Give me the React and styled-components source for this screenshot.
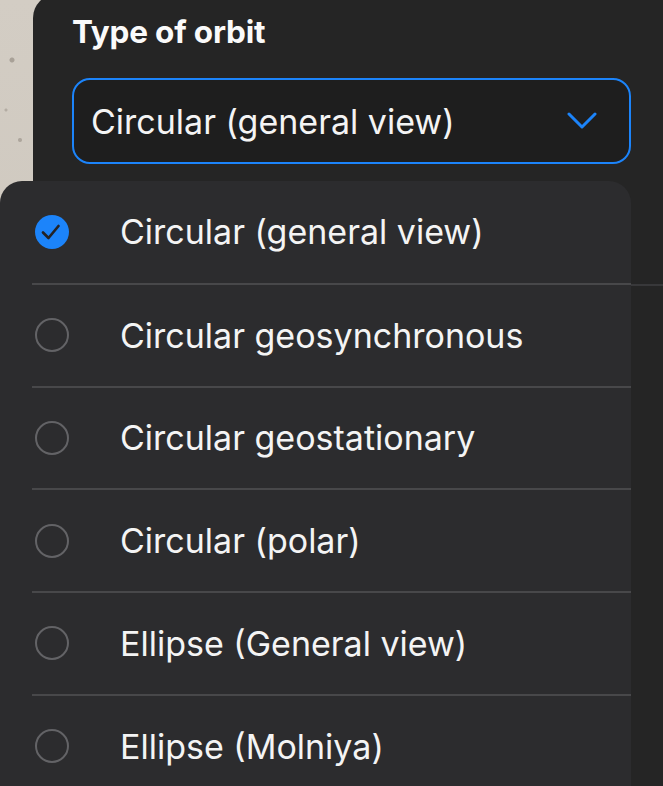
import React, { useState } from "react"
import styled, { createGlobalStyle } from "styled-components"

const GlobalStyle = createGlobalStyle`
  html, body { margin: 0; padding: 0; }
  body {
    font-family: Inter, "Noto Sans", "Liberation Sans", sans-serif;
    background: #cbc5bc;
    -webkit-font-smoothing: antialiased;
  }
`

const orbits = [
  "Circular (general view)",
  "Circular geosynchronous",
  "Circular geostationary",
  "Circular (polar)",
  "Ellipse (General view)",
  "Ellipse (Molniya)",
]

const Screen = styled.div`
  position: relative;
  width: 663px;
  height: 786px;
  overflow: hidden;
  background:
    radial-gradient(circle at 12px 60px, rgba(90, 80, 70, 0.35) 0 2px, transparent 3px),
    radial-gradient(circle at 20px 140px, rgba(90, 80, 70, 0.3) 0 1.5px, transparent 2.5px),
    radial-gradient(circle at 6px 110px, rgba(90, 80, 70, 0.25) 0 1px, transparent 2px),
    linear-gradient(180deg, #d3cdc4 0%, #c8c1b7 100%);
`

const Panel = styled.section`
  margin-left: 33px;
  margin-top: -6px;
  height: 800px;
  background: #252525;
  border-top-left-radius: 24px;
  padding: 20px 0 0 39px;
  box-sizing: border-box;
`

const Title = styled.h2`
  margin: 0;
  color: #fafafa;
  font-size: 31.5px;
  font-weight: 700;
  line-height: 36px;
  letter-spacing: -0.2px;
`

const Select = styled.button`
  display: flex;
  align-items: center;
  justify-content: space-between;
  margin-top: 28px;
  width: 559px;
  height: 86px;
  padding: 0 32px 0 17px;
  box-sizing: border-box;
  background: #1e1e1e;
  border: 2px solid #1c84fa;
  border-radius: 18px;
  color: #f4f4f4;
  font-family: inherit;
  font-size: 34px;
  cursor: pointer;
`

const BackDivider = styled.div`
  margin-top: 120px;
  height: 2px;
  background: #38383a;
`

const Menu = styled.ul`
  position: absolute;
  left: 0;
  top: 181px;
  width: 631px;
  bottom: -20px;
  margin: 0;
  padding: 0;
  list-style: none;
  background: #2c2c2e;
  border-radius: 22px 22px 0 0;
`

const Option = styled.li`
  display: flex;
  align-items: center;
  gap: 51px;
  height: 100.75px;
  margin-left: 32px;
  padding-left: 3px;
  border-bottom: 2px solid ${p => (p.last ? "transparent" : "#48484a")};
  color: #f4f4f4;
  font-size: 34px;
  cursor: pointer;
  &:first-child { height: 101.75px; }
`

const Radio = styled.span`
  flex: none;
  width: 34px;
  height: 34px;
  box-sizing: border-box;
  border-radius: 50%;
  display: flex;
  align-items: center;
  justify-content: center;
  background: ${p => (p.checked ? "#1c84fa" : "transparent")};
  border: ${p => (p.checked ? "none" : "2.5px solid #636366")};
`

const Chevron = () => (
  <svg width="30" height="18" viewBox="0 0 30 18">
    <path d="M2 2 L15 15 L28 2" fill="none" stroke="#1c84fa" strokeWidth="3" strokeLinecap="round" strokeLinejoin="round" />
  </svg>
)

const Check = () => (
  <svg width="34" height="34" viewBox="0 0 34 34">
    <path d="M8 17.5 L13.5 23 L23.5 11" fill="none" stroke="#232326" strokeWidth="2.7" strokeLinecap="round" strokeLinejoin="round" />
  </svg>
)

const App = () => {
  const [selected, setSelected] = useState(0)

  return (
    <Screen>
      <GlobalStyle />
      <Panel>
        <Title>Type of orbit</Title>
        <Select>
          <span>{orbits[selected]}</span>
          <Chevron />
        </Select>
        <BackDivider />
      </Panel>
      <Menu>
        {orbits.map((name, i) => (
          <Option key={name} last={i === orbits.length - 1} onClick={() => setSelected(i)}>
            <Radio checked={i === selected}>{i === selected && <Check />}</Radio>
            <span>{name}</span>
          </Option>
        ))}
      </Menu>
    </Screen>
  )
}

export default App
